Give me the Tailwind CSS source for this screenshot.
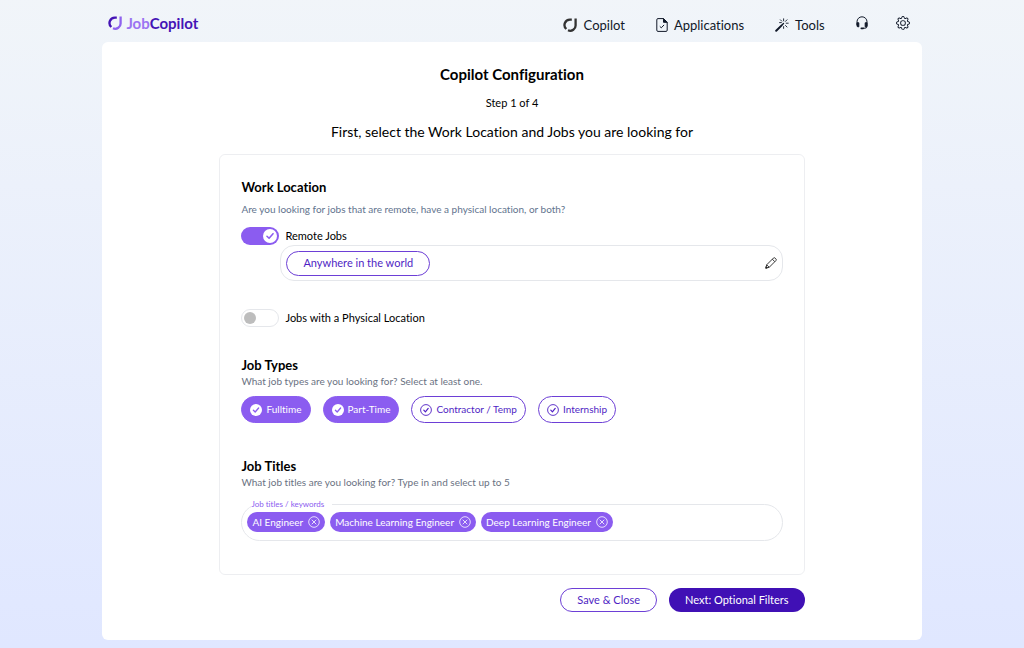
<!DOCTYPE html>
<html lang="en">

<head>
    <meta charset="UTF-8">
    <meta name="viewport" content="width=device-width, initial-scale=1.0">
    <title>JobCopilot - Copilot Configuration</title>
    <script src="https://cdn.jsdelivr.net/npm/@tailwindcss/browser@4"></script>
</head>

<body class="min-h-screen bg-linear-to-b from-slate-100 to-indigo-100 pb-2 font-['Lato',sans-serif] text-black [font-variant-ligatures:no-common-ligatures]">

    <!-- Shared icons -->
    <svg class="hidden">
        <symbol id="check" viewBox="0 0 12 12">
            <path d="M3.4 6.2l1.8 1.8 3.4-4" fill="none" stroke="currentColor" stroke-width="1.3"
                stroke-linecap="round" stroke-linejoin="round" />
        </symbol>
        <symbol id="check-outline" viewBox="0 0 12 12">
            <circle cx="6" cy="6" r="5.4" fill="none" stroke="currentColor" stroke-width="0.9" />
            <path d="M3.8 6.2l1.6 1.6 2.8-3.4" fill="none" stroke="currentColor" stroke-width="1.2"
                stroke-linecap="round" stroke-linejoin="round" />
        </symbol>
        <symbol id="remove" viewBox="0 0 12 12">
            <circle cx="6" cy="6" r="5.3" fill="none" stroke="currentColor" stroke-width="0.8" />
            <path d="M4 4l4 4M8 4l-4 4" stroke="currentColor" stroke-width="0.8" stroke-linecap="round" />
        </symbol>
        <symbol id="logo" viewBox="0 0 14 14">
            <path d="M8.8 1.6H7A5.4 5.4 0 0 0 3.3 11" fill="none" stroke="var(--ring, #333)" stroke-width="2.3" />
            <path d="M12.6.6V7A5.4 5.4 0 0 1 5 12.3" fill="none" stroke="currentColor" stroke-width="2.3" />
        </symbol>
    </svg>

    <!-- Header -->
    <header class="mx-auto flex h-[42px] w-4/5 items-center justify-between pt-2 pr-3 pl-1.5">
        <a href="#" class="flex items-center gap-1 pb-1 text-[15px] leading-5 font-bold">
            <svg class="size-3.5 text-[#8f62ee] [--ring:#4413b5]"><use href="#logo" /></svg>
            <span class="text-[#4413b5]"><span class="text-[#9b74f2]">Job</span>Copilot</span>
        </a>
        <nav class="flex items-center text-[13px] leading-5 text-gray-900">
            <a href="#" class="mr-[31px] flex items-center gap-[7px]">
                <svg class="size-3.5 text-[#333]"><use href="#logo" /></svg>
                Copilot
            </a>
            <a href="#" class="mr-[31px] flex items-center gap-1.5">
                <svg class="h-3.5 w-3" viewBox="0 0 12 14" fill="none" stroke="currentColor" stroke-linejoin="round">
                    <path d="M7.5.6H2A1.2 1.2 0 0 0 .8 1.8v10.4A1.2 1.2 0 0 0 2 13.4h8a1.2 1.2 0 0 0 1.2-1.2V4.3z" />
                    <path d="M7.5.6v3.7h3.7z" fill="currentColor" />
                    <path d="M3.8 8.4l1.5 1.4 2.8-2.9" />
                </svg>
                Applications
            </a>
            <a href="#" class="mr-[31px] flex items-center gap-1.5">
                <svg class="size-3.5" viewBox="0 0 14 14" fill="none" stroke="currentColor" stroke-linecap="round">
                    <path d="M1.2 12.8L6.4 7.6" stroke-width="2" />
                    <path d="M7 7l1.5-1.5" stroke-width="1.4" />
                    <path d="M8.6.8v2M8.6 8.6v1.8M4.6 4.6h1.8M11.2 5.2h2M5.4 1.8l1.3 1.3M12 1.8l-1.6 1.6M10.5 7.5l1.5 1.5" stroke-width="0.9" />
                </svg>
                Tools
            </a>
            <a href="#" aria-label="Support" class="mr-7 pb-1">
                <svg class="h-3.5 w-3" viewBox="0 0 12 14" fill="none" stroke="currentColor">
                    <path d="M1 9V5.8a5 5 0 0 1 10 0v4.4a2 2 0 0 1-2 2H7" stroke-width="1" />
                    <path d="M1 6.8h1.8v4H2a1 1 0 0 1-1-1zM11 6.8H9.2v4H10a1 1 0 0 0 1-1z" fill="currentColor" />
                    <path d="M5.3 12.4h1.8" stroke-width="1.6" stroke-linecap="round" />
                </svg>
            </a>
            <a href="#" aria-label="Settings" class="pb-1">
                <svg class="size-3.5" viewBox="0 0 16 16" fill="currentColor">
                    <path d="M8 4.754a3.246 3.246 0 1 0 0 6.492 3.246 3.246 0 0 0 0-6.492M5.754 8a2.246 2.246 0 1 1 4.492 0 2.246 2.246 0 0 1-4.492 0" />
                    <path d="M9.796 1.343c-.527-1.79-3.065-1.79-3.592 0l-.094.319a.873.873 0 0 1-1.255.52l-.292-.16c-1.64-.892-3.433.902-2.54 2.541l.159.292a.873.873 0 0 1-.52 1.255l-.319.094c-1.79.527-1.79 3.065 0 3.592l.319.094a.873.873 0 0 1 .52 1.255l-.16.292c-.892 1.64.901 3.434 2.541 2.54l.292-.159a.873.873 0 0 1 1.255.52l.094.319c.527 1.79 3.065 1.79 3.592 0l.094-.319a.873.873 0 0 1 1.255-.52l.292.16c1.64.893 3.434-.902 2.54-2.541l-.159-.292a.873.873 0 0 1 .52-1.255l.319-.094c1.79-.527 1.79-3.065 0-3.592l-.319-.094a.873.873 0 0 1-.52-1.255l.16-.292c.893-1.64-.902-3.433-2.541-2.54l-.292.159a.873.873 0 0 1-1.255-.52zm-2.633.283c.246-.835 1.428-.835 1.674 0l.094.319a1.873 1.873 0 0 0 2.693 1.115l.291-.16c.764-.415 1.6.42 1.184 1.185l-.159.292a1.873 1.873 0 0 0 1.116 2.692l.318.094c.835.246.835 1.428 0 1.674l-.319.094a1.873 1.873 0 0 0-1.115 2.693l.16.291c.415.764-.42 1.6-1.185 1.184l-.291-.159a1.873 1.873 0 0 0-2.693 1.116l-.094.318c-.246.835-1.428.835-1.674 0l-.094-.319a1.873 1.873 0 0 0-2.692-1.115l-.292.16c-.764.415-1.6-.42-1.184-1.185l.159-.291A1.873 1.873 0 0 0 1.945 8.93l-.319-.094c-.835-.246-.835-1.428 0-1.674l.319-.094A1.873 1.873 0 0 0 3.06 4.377l-.16-.292c-.415-.764.42-1.6 1.185-1.184l.292.159a1.873 1.873 0 0 0 2.692-1.115z" />
                </svg>
            </a>
        </nav>
    </header>

    <main class="mx-auto w-4/5 rounded-md bg-white pt-5 pb-7">
        <div class="text-center">
            <h1 class="text-[15px] leading-6 font-bold">Copilot Configuration</h1>
            <p class="mt-[7px] text-[11px] leading-5">Step 1 of 4</p>
            <h2 class="mt-[7px] text-sm leading-6">First, select the Work Location and Jobs you are looking for</h2>
        </div>

        <form class="mx-auto mt-2.5 w-5/7">
            <div class="rounded-md border border-gray-200/70 px-[21px] pt-5 pb-[33px]">

                <!-- Work location -->
                <h3 class="text-[13px] leading-6 font-bold">Work Location</h3>
                <p class="mt-0.5 text-[10px] leading-4 text-slate-500">Are you looking for jobs that are remote, have a physical location, or both?</p>
                <label class="mt-2.5 flex h-[18px] w-fit items-center gap-1.5 text-[11px]">
                    <span class="relative flex">
                        <input type="checkbox" checked class="h-[18px] w-[38px] appearance-none rounded-full bg-[#8b5cf0]">
                        <svg class="absolute top-0.5 right-0.5 size-3.5 rounded-full bg-white text-[#8b5cf0]"><use href="#check" /></svg>
                    </span>
                    Remote Jobs
                </label>
                <div class="ml-[39px] flex h-9 items-center justify-between rounded-[14px] border border-gray-200 px-[5px]">
                    <button type="button" class="h-[25px] rounded-full border border-[#6d3fd6] px-4 text-[11px] text-[#4f1fc4]">Anywhere in the world</button>
                    <button type="button" aria-label="Edit location">
                        <svg class="size-3" viewBox="0 0 12 12" fill="none" stroke="#222" stroke-width="0.9" stroke-linejoin="round">
                            <path d="M.8 11.2l.9-3.4L8.4 1.1a1.2 1.2 0 0 1 1.7 0l.8.8a1.2 1.2 0 0 1 0 1.7L4.2 10.3z" />
                            <path d="M7.3 2.2l2.5 2.5M1.7 7.8l2.5 2.5" />
                            <path d="M.8 11.2l.4-1.5 1.1 1.1z" fill="#222" />
                        </svg>
                    </button>
                </div>
                <label class="mt-7 flex h-[18px] w-fit items-center gap-1.5 text-[11px]">
                    <span class="relative flex">
                        <input type="checkbox" class="h-[18px] w-[38px] appearance-none rounded-full border border-gray-200 bg-white">
                        <span class="absolute top-[3px] left-[3px] size-3 rounded-full bg-[#bdbdbd]"></span>
                    </span>
                    Jobs with a Physical Location
                </label>

                <!-- Job types -->
                <h3 class="mt-[30px] text-[13px] leading-4 font-bold">Job Types</h3>
                <p class="text-[10px] leading-4 text-gray-500">What job types are you looking for? Select at least one.</p>
                <div class="mt-[7px] flex flex-wrap gap-3 text-[10px]">
                    <label class="flex h-[27px] items-center gap-1 rounded-full border border-[#8b5cf0] bg-[#8b5cf0] px-2 text-white">
                        <input type="checkbox" checked class="sr-only">
                        <svg class="size-3 rounded-full bg-white text-[#8b5cf0]"><use href="#check" /></svg>
                        Fulltime
                    </label>
                    <label class="flex h-[27px] items-center gap-1 rounded-full border border-[#8b5cf0] bg-[#8b5cf0] px-2 text-white">
                        <input type="checkbox" checked class="sr-only">
                        <svg class="size-3 rounded-full bg-white text-[#8b5cf0]"><use href="#check" /></svg>
                        Part-Time
                    </label>
                    <label class="flex h-[27px] items-center gap-1 rounded-full border border-[#6d3fd6] px-2 text-[#4f1fc4]">
                        <input type="checkbox" class="sr-only">
                        <svg class="size-3"><use href="#check-outline" /></svg>
                        Contractor / Temp
                    </label>
                    <label class="flex h-[27px] items-center gap-1 rounded-full border border-[#6d3fd6] px-2 text-[#4f1fc4]">
                        <input type="checkbox" class="sr-only">
                        <svg class="size-3"><use href="#check-outline" /></svg>
                        Internship
                    </label>
                </div>

                <!-- Job titles -->
                <h3 class="mt-[35px] text-[13px] leading-4 font-bold">Job Titles</h3>
                <p class="text-[10px] leading-4 text-gray-500">What job titles are you looking for? Type in and select up to 5</p>
                <fieldset class="mt-2 rounded-[20px] border border-gray-200 px-[5px] pt-0.5 pb-2">
                    <legend class="ml-1 pr-2 text-[8px] leading-3 text-[#8b5cf0]">Job titles / keywords</legend>
                    <div class="flex flex-wrap gap-[5px] text-[10px] text-white">
                        <span class="flex h-5 items-center gap-[5px] rounded-full bg-[#8b5cf0] px-[5px]">
                            AI Engineer
                            <button type="button" aria-label="Remove AI Engineer"><svg class="size-3"><use href="#remove" /></svg></button>
                        </span>
                        <span class="flex h-5 items-center gap-[5px] rounded-full bg-[#8b5cf0] px-[5px]">
                            Machine Learning Engineer
                            <button type="button" aria-label="Remove Machine Learning Engineer"><svg class="size-3"><use href="#remove" /></svg></button>
                        </span>
                        <span class="flex h-5 items-center gap-[5px] rounded-full bg-[#8b5cf0] px-[5px]">
                            Deep Learning Engineer
                            <button type="button" aria-label="Remove Deep Learning Engineer"><svg class="size-3"><use href="#remove" /></svg></button>
                        </span>
                        <input type="text" aria-label="Job titles / keywords" class="h-5 min-w-0 flex-1 text-gray-900 outline-none">
                    </div>
                </fieldset>
            </div>

            <div class="mt-[13px] flex justify-end gap-3 text-[11px]">
                <button type="button" class="h-6 rounded-full border border-[#6d3fd6] px-4 text-[#4f1fc4]">Save &amp; Close</button>
                <button type="submit" class="h-6 rounded-full bg-[#4010b5] px-4 text-white">Next: Optional Filters</button>
            </div>
        </form>
    </main>

</body>

</html>
